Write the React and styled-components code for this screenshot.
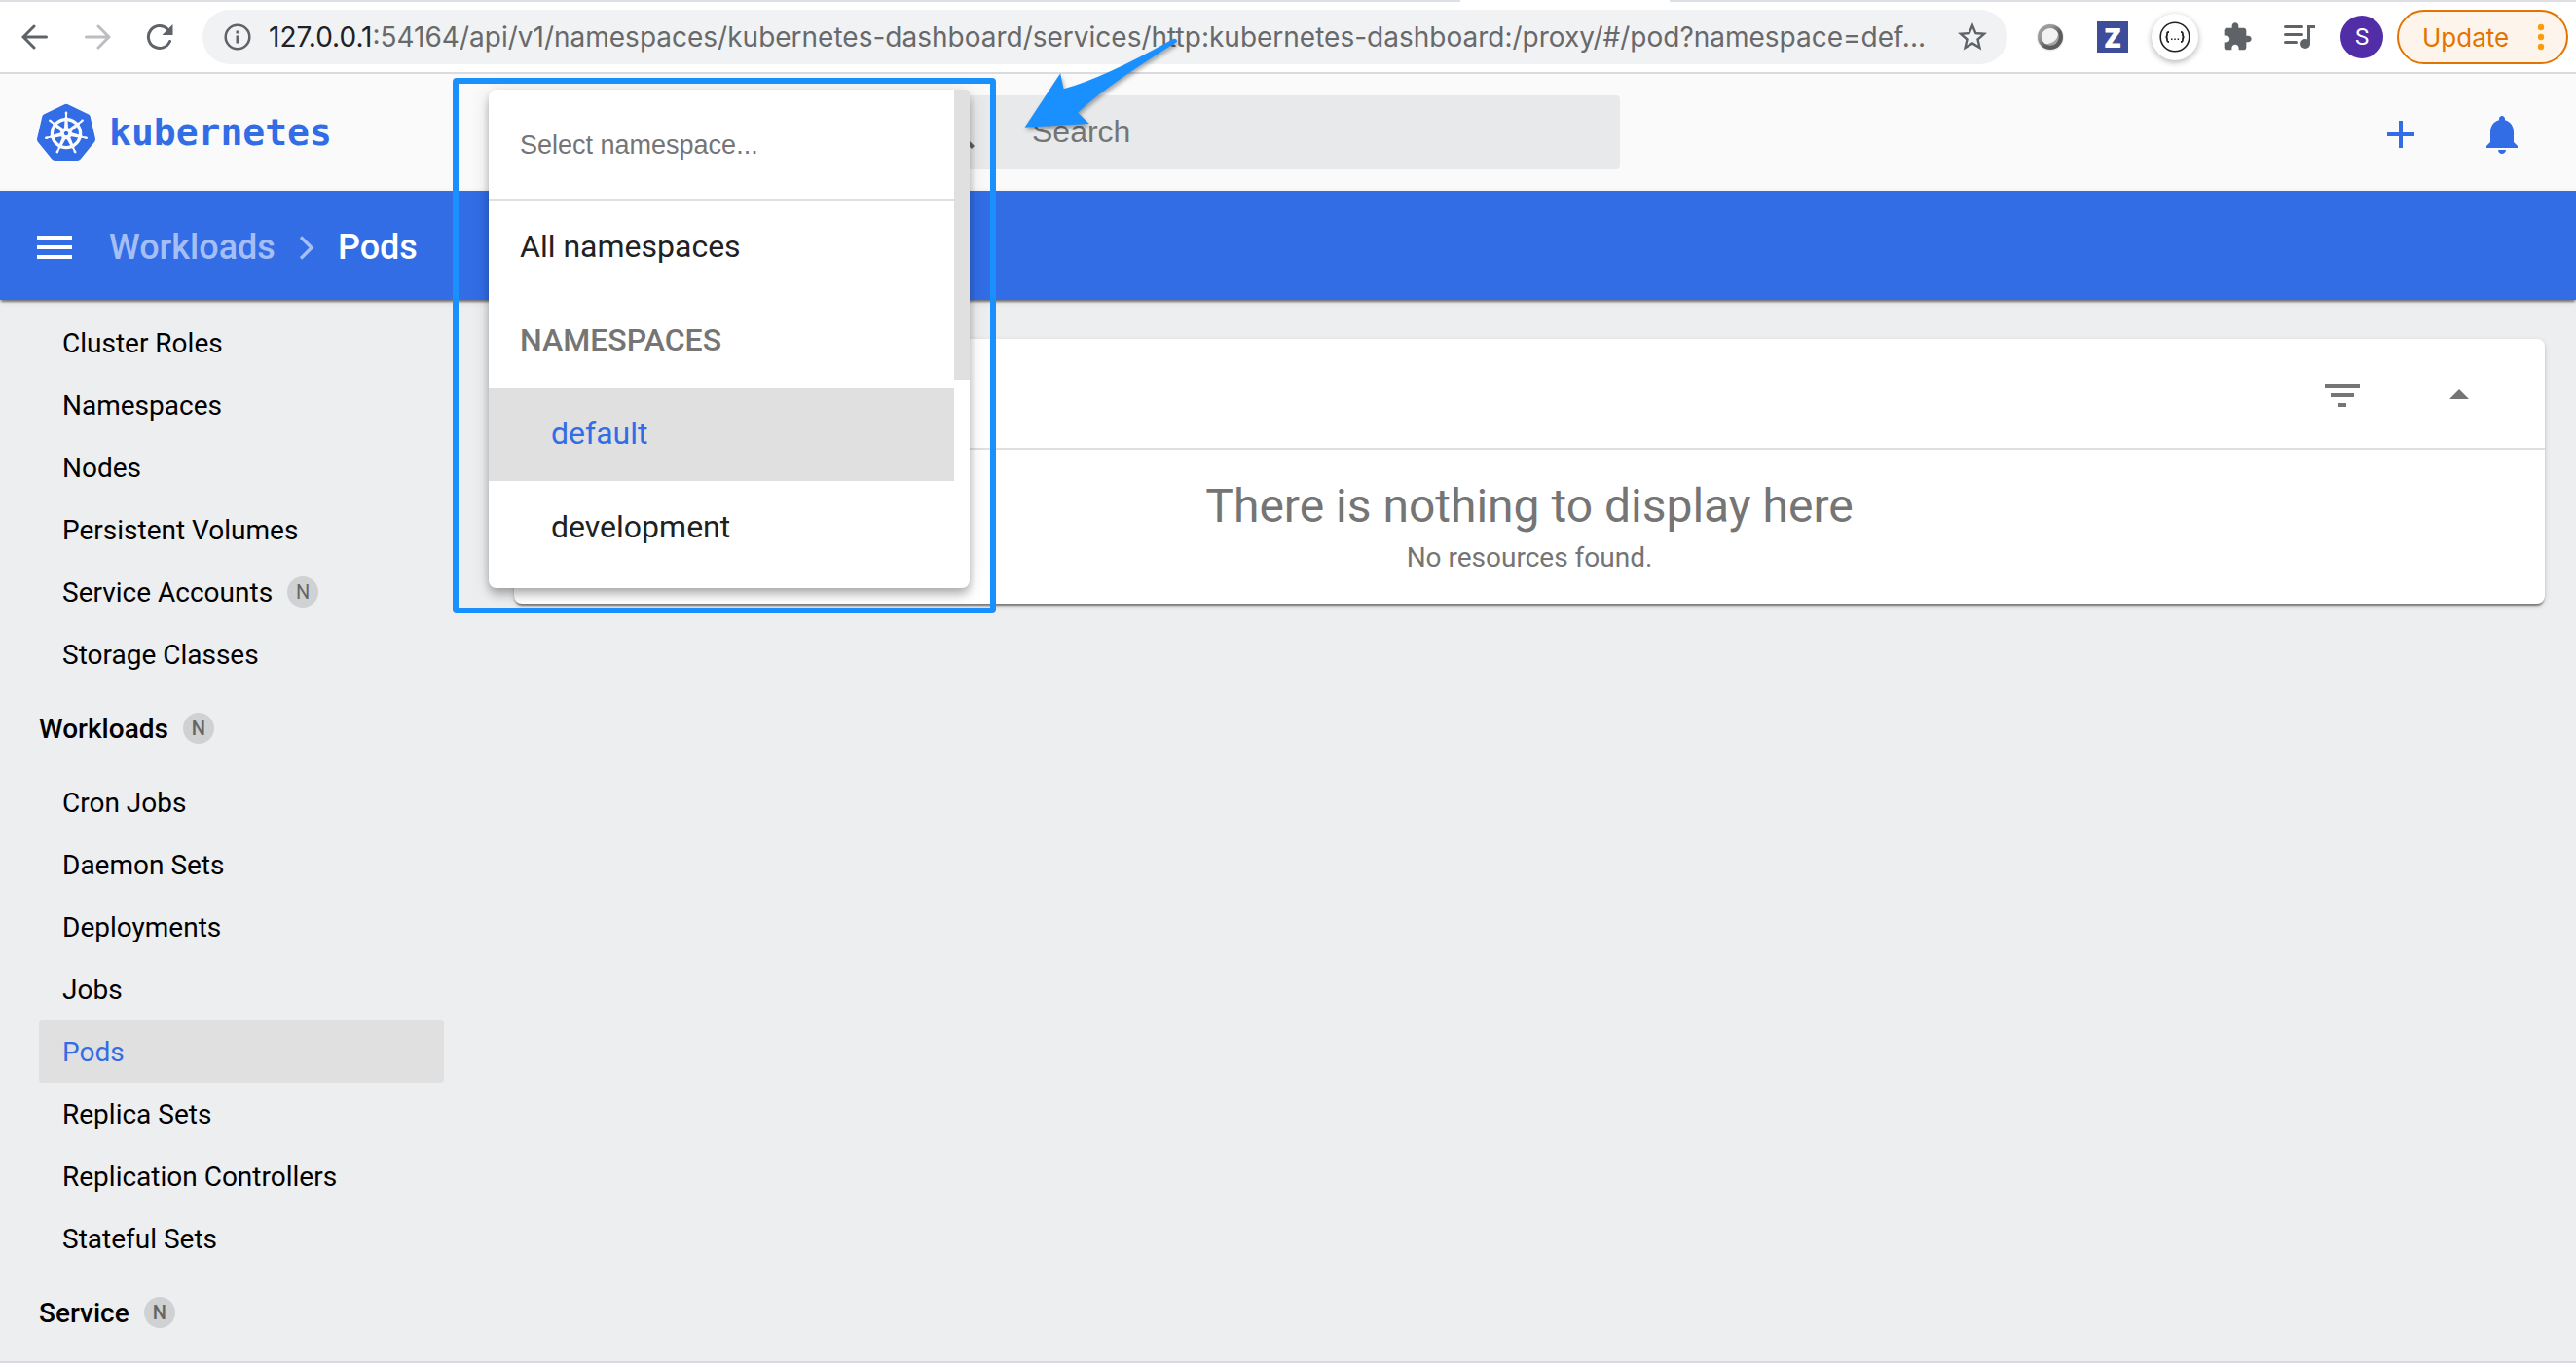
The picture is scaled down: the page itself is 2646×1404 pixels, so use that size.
import React from "react";
import styled, { createGlobalStyle, css } from "styled-components";
import { SiKubernetes } from "react-icons/si";

const color = {
  blue: "#326de6",
  mark: "#1a90ff",
  chrome: "#5f6368",
  muted: "#757575",
  line: "#e0e0e0",
  page: "#edeef0",
};

const GlobalStyle = createGlobalStyle`
  *, *::before, *::after { box-sizing: border-box; }
  body { margin: 0; background: #fff; font-family: Roboto, "Open Sans", sans-serif; font-size: 28px; }
  button, input { font: inherit; color: inherit; border: 0; padding: 0; margin: 0; background: none; outline: none; }
  button { cursor: pointer; }
  a { color: inherit; text-decoration: none; }
  ul { list-style: none; margin: 0; padding: 0; }
  svg { display: block; }
`;

const Window = styled.div`
  display: flex;
  flex-direction: column;
  min-height: 100vh;
`;

/* Browser chrome */

const TabEdge = styled.div`
  display: grid;
  grid-template-columns: 1500fr 215fr 931fr;
  height: 2px;
`;

const TabEdgePart = styled.span`
  background: ${(p) => (p.$active ? "#fff" : "#dfdfe6")};
`;

const BrowserBar = styled.div`
  display: flex;
  align-items: center;
  height: 74px;
  padding: 0 8px 0 4px;
  border-bottom: 2px solid #dadbe0;
  background: #fff;
  color: ${color.chrome};
`;

const ChromeButton = styled.button`
  display: flex;
  align-items: center;
  justify-content: center;
  flex: none;
  width: 64px;
  height: 56px;
  opacity: ${(p) => (p.disabled ? 0.42 : 1)};
`;

const AddressBar = styled.div`
  display: flex;
  align-items: center;
  flex: 1;
  min-width: 0;
  height: 56px;
  margin: 0 12px;
  padding: 0 18px 0 20px;
  border-radius: 28px;
  background: #f1f2f4;
`;

const Address = styled.div`
  flex: 1;
  min-width: 0;
  margin: 0 28px 0 16px;
  overflow: hidden;
  white-space: nowrap;
  text-overflow: ellipsis;
  font-family: Inter, Roboto, sans-serif;
  font-size: 28px;
  line-height: 40px;
  color: #68696b;
`;

const AddressHost = styled.span`
  color: #202124;
`;

const ZBadge = styled.span`
  display: grid;
  place-items: center;
  width: 32px;
  height: 32px;
  background: #3d4d99;
  color: #fff;
  font-family: "Open Sans", sans-serif;
  font-size: 28px;
  font-weight: 800;
  line-height: 32px;
`;

const RoundBadge = styled.span`
  display: grid;
  place-items: center;
  width: 48px;
  height: 48px;
  border-radius: 50%;
  background: #fff;
  box-shadow: 0 2px 6px rgba(0, 0, 0, 0.3);
`;

const Avatar = styled.span`
  display: grid;
  place-items: center;
  width: 44px;
  height: 44px;
  border-radius: 50%;
  background: #512da8;
  color: #fff;
  font-size: 24px;
`;

const UpdateButton = styled.button`
  display: flex;
  align-items: center;
  justify-content: space-between;
  flex: none;
  width: 176px;
  height: 56px;
  margin-left: 4px;
  padding: 0 22px 0 24px;
  border: 2px solid #e37400;
  border-radius: 28px;
  background: #fdf5eb;
  color: #e37400;
  font-family: Inter, Roboto, sans-serif;
  font-size: 26px;
`;

/* Dashboard header */

const Header = styled.header`
  display: flex;
  align-items: center;
  height: 120px;
  padding: 0 36px 0 38px;
  background: #fafafa;
`;

const Brand = styled.a`
  display: flex;
  align-items: center;
  gap: 14px;
  flex: none;
  width: 464px;
  color: ${color.blue};
  font-family: "DejaVu Sans Mono", monospace;
  font-size: 38px;
  font-weight: 700;
  line-height: 60px;

  svg { filter: drop-shadow(0 0 1px #fff); }
`;

const NamespacePicker = styled.div`
  position: relative;
  z-index: 2;
  flex: none;
  align-self: stretch;
  width: 434px;
`;

const SearchBox = styled.label`
  display: flex;
  align-items: center;
  flex: 0 1 728px;
  height: 76px;
  padding: 0 24px;
  border-radius: 4px;
  background: #e7e9eb;
  color: #616161;
`;

const SearchInput = styled.input`
  flex: 1;
  min-width: 0;
  margin-left: 52px;
  padding-bottom: 2px;
  font-family: "Liberation Sans", sans-serif;
  font-size: 32px;

  &::placeholder { color: ${color.muted}; opacity: 1; }
`;

const HeaderActions = styled.div`
  display: flex;
  gap: 24px;
  margin-left: auto;
  padding-top: 4px;
  color: ${color.blue};
`;

const IconButton = styled.button`
  display: grid;
  place-items: center;
  width: 80px;
  height: 80px;
`;

/* Namespace drop-down */

const Panel = styled.div`
  position: absolute;
  top: 16px;
  left: 0;
  display: flex;
  width: 494px;
  height: 512px;
  border-radius: 8px;
  background: #fff;
  box-shadow: 0 4px 8px -2px rgba(0, 0, 0, 0.2), 0 8px 10px rgba(0, 0, 0, 0.14),
    0 2px 20px rgba(0, 0, 0, 0.12);
`;

const PanelList = styled.div`
  display: flex;
  flex-direction: column;
  flex: 1;
`;

const PanelScroll = styled.div`
  width: 16px;
`;

const PanelThumb = styled.div`
  height: 298px;
  border-top-right-radius: 4px;
  background: ${color.line};
`;

const FilterInput = styled.input`
  width: 100%;
  height: 114px;
  padding: 2px 32px 0;
  border-bottom: 2px solid ${color.line};
  font-family: "Liberation Sans", sans-serif;
  font-size: 27px;

  &::placeholder { color: ${color.muted}; opacity: 1; }
`;

const optionRow = css`
  height: 96px;
  padding: 0 32px 2px;
  font-size: 32px;
  line-height: 94px;
  text-align: left;
`;

const Option = styled.button`
  ${optionRow}
  padding-left: ${(p) => (p.$nested ? 64 : 32)}px;
  color: ${(p) => (p.$selected ? color.blue : "#212121")};
  background: ${(p) => (p.$selected ? color.line : "transparent")};
`;

const OptionGroup = styled.div`
  ${optionRow}
  color: ${color.muted};
  font-weight: 500;
`;

/* Annotation */

const MarkBox = styled.div`
  position: absolute;
  top: 4px;
  left: -37px;
  width: 558px;
  height: 550px;
  border: 6px solid ${color.mark};
  border-radius: 4px;
  pointer-events: none;
`;

const MarkArrow = styled.svg`
  position: absolute;
  top: -40px;
  left: 546px;
  pointer-events: none;
  filter: drop-shadow(1px 3px 2px rgba(0, 0, 0, 0.35));
`;

/* Breadcrumbs */

const ActionBar = styled.div`
  position: relative;
  z-index: 1;
  display: flex;
  align-items: center;
  height: 112px;
  padding: 4px 32px 0 16px;
  background: ${color.blue};
  color: #fff;
  box-shadow: 0 4px 2px -2px rgba(0, 0, 0, 0.3), 0 2px 2px rgba(0, 0, 0, 0.2),
    0 2px 6px rgba(0, 0, 0, 0.12);
`;

const Crumbs = styled.nav`
  display: flex;
  align-items: center;
  gap: 23px;
  margin-left: 16px;
  font-size: 36px;
  font-weight: 500;
  line-height: 48px;
`;

const Crumb = styled.a`
  color: ${(p) => (p.$current ? "#fff" : "#a5bef5")};
`;

/* Body */

const Body = styled.div`
  display: grid;
  grid-template-columns: 496px minmax(0, 1fr);
  flex: 1;
  background: ${color.page};
  border-bottom: 2px solid #dadbe0;
  margin-bottom: 4px;
`;

const Sidebar = styled.nav`
  padding: 12px 40px 0;
  color: #000;
`;

const NavHeading = styled.a`
  display: flex;
  align-items: center;
  gap: 15px;
  height: 88px;
  font-weight: 500;
`;

const NavItem = styled.a`
  display: flex;
  align-items: center;
  gap: 15px;
  height: 64px;
  padding: 0 24px;
  border-radius: 4px;
  color: ${(p) => (p.$active ? color.blue : "inherit")};
  background: ${(p) => (p.$active ? color.line : "transparent")};
`;

const Badge = styled.span`
  display: grid;
  place-items: center;
  width: 32px;
  height: 32px;
  border-radius: 50%;
  background: #d0d1d3;
  color: #666;
  font-size: 20px;
`;

const Main = styled.main`
  padding: 40px 32px;
`;

const Card = styled.section`
  border-radius: 8px;
  background: #fff;
  color: ${color.muted};
  box-shadow: 0 4px 2px -2px rgba(0, 0, 0, 0.3), 0 2px 2px rgba(0, 0, 0, 0.2),
    0 2px 6px rgba(0, 0, 0, 0.12);
`;

const CardHeader = styled.div`
  display: flex;
  align-items: center;
  justify-content: flex-end;
  gap: 40px;
  height: 114px;
  padding: 4px 48px 0;
  border-bottom: 2px solid ${color.line};
`;

const Empty = styled.div`
  padding: 26px 0;
  text-align: center;
`;

const EmptyTitle = styled.h2`
  margin: 0;
  font-size: 48px;
  font-weight: 400;
  line-height: 64px;
`;

const EmptyText = styled.p`
  margin: 0;
  line-height: 42px;
`;

function Icon({ d, size = 48 }) {
  return (
    <svg width={size} height={size} viewBox="0 0 24 24" fill="currentColor" aria-hidden="true">
      <path d={d} />
    </svg>
  );
}

function ArrowIcon({ flip }) {
  return (
    <svg
      width="28"
      height="28"
      viewBox="0 0 28 28"
      fill="none"
      stroke="currentColor"
      strokeWidth="3"
      strokeLinecap="round"
      aria-hidden="true"
    >
      <path d={flip ? "M2.5 14H25M15 3l11 11-11 11" : "M25.500 14H3M13 3L2 14l11 11"} />
    </svg>
  );
}

function ReloadIcon() {
  return (
    <svg width="28" height="28" viewBox="0 0 28 28" aria-hidden="true">
      <path
        d="M24.500 18.500A11.500 11.500 0 1 1 22 5.800"
        fill="none"
        stroke="currentColor"
        strokeWidth="3"
        strokeLinecap="round"
      />
      <path d="M27.500 1v11H16.500z" fill="currentColor" />
    </svg>
  );
}

function InfoIcon() {
  return (
    <svg width="32" height="32" viewBox="0 0 32 32" aria-hidden="true">
      <circle cx="16" cy="16" r="12.300" fill="none" stroke="currentColor" strokeWidth="2.500" />
      <path d="M14.500 9.500h3v3h-3zM14.500 14.500h3v8h-3z" fill="currentColor" />
    </svg>
  );
}

function OrbIcon() {
  return (
    <svg width="32" height="32" viewBox="0 0 32 32" aria-hidden="true">
      <defs>
        <linearGradient id="orbRing" x1="0" y1="0" x2="1" y2="1">
          <stop offset="0.300" stopColor="#9b9b9b" />
          <stop offset="0.600" stopColor="#5c5c5c" />
        </linearGradient>
      </defs>
      <circle cx="16" cy="16.500" r="14" fill="#ececec" />
      <circle cx="16" cy="16" r="13" fill="url(#orbRing)" />
      <circle cx="16" cy="16" r="8.800" fill="#a5a5a5" />
      <path d="M24 12.500a8.800 8.800 0 1 0-13 10.600c7 0 12.500-4 13-10.600z" fill="#f2f2f2" />
    </svg>
  );
}

function BracesIcon() {
  return (
    <svg width="32" height="32" viewBox="0 0 32 32" fill="none" stroke="#222" aria-hidden="true">
      <circle cx="16" cy="16" r="14.800" strokeWidth="1.600" />
      <path
        d="M10 11c-2 0-2 .6-2 2.500S7.500 16 6.500 16c1 0 1.500.6 1.500 2.500S8 21 10 21M22 11c2 0 2 .6 2 2.500s.5 2.500 1.500 2.500c-1 0-1.500.6-1.500 2.500S24 21 22 21"
        strokeWidth="1.800"
      />
      <path d="M12 18.200h1.500M15.300 18.200h1.500M18.600 18.200h1.500" strokeWidth="1.500" />
    </svg>
  );
}

function QueueIcon() {
  return (
    <svg width="32" height="28" viewBox="0 0 32 28" aria-hidden="true">
      <path
        d="M1.500 3.500h17M1.500 11.500h17M1.500 19.500h11"
        stroke="currentColor"
        strokeWidth="3"
        strokeLinecap="round"
      />
      <path d="M24 16.500V2h8v3h-5v16z" fill="currentColor" />
      <circle cx="22" cy="21" r="5" fill="currentColor" />
    </svg>
  );
}

function DotsIcon() {
  return (
    <svg width="8" height="28" viewBox="0 0 8 28" fill="#f99d0b" aria-hidden="true">
      <circle cx="4" cy="4" r="3.200" />
      <circle cx="4" cy="14" r="3.200" />
      <circle cx="4" cy="24" r="3.200" />
    </svg>
  );
}

function ChevronIcon() {
  return (
    <svg width="18" height="28" viewBox="0 0 18 28" fill="none" stroke="#a5bef5" strokeWidth="3.500" aria-hidden="true">
      <path d="M3 3.500L14 14.500L3 25.500" />
    </svg>
  );
}

const icons = {
  star: "M22 9.240l-7.190-.620L12 2 9.190 8.630 2 9.240l5.460 4.730L5.820 21 12 17.270 18.180 21l-1.630-7.030L22 9.240zM12 15.400l-3.760 2.270 1-4.280-3.320-2.880 4.380-.380L12 6.100l1.710 4.040 4.380.380-3.320 2.880 1 4.280L12 15.400z",
  puzzle:
    "M20.500 11H19V7c0-1.100-.900-2-2-2h-4V3.500C13 2.120 11.880 1 10.500 1S8 2.120 8 3.500V5H4c-1.100 0-1.990.900-1.990 2v3.800H3.500c1.490 0 2.700 1.210 2.700 2.700s-1.210 2.700-2.700 2.700H2V20c0 1.100.900 2 2 2h3.800v-1.500c0-1.490 1.210-2.700 2.700-2.700 1.490 0 2.700 1.210 2.700 2.700V22H17c1.100 0 2-.900 2-2v-4h1.500c1.380 0 2.500-1.120 2.500-2.500S21.880 11 20.500 11z",
  search:
    "M15.500 14h-.790l-.280-.270A6.471 6.471 0 0 0 16 9.500 6.500 6.500 0 1 0 9.500 16c1.610 0 3.090-.590 4.230-1.570l.270.280v.790l5 4.990L20.490 19l-4.990-5zm-6 0C7.010 14 5 11.990 5 9.500S7.010 5 9.500 5 14 7.010 14 9.500 11.990 14 9.500 14z",
  add: "M19 13h-6v6h-2v-6H5v-2h6V5h2v6h6v2z",
  bell: "M12 22c1.100 0 2-.900 2-2h-4c0 1.100.890 2 2 2zm6-6v-5c0-3.070-1.640-5.640-4.500-6.320V4c0-.830-.670-1.500-1.500-1.500s-1.500.670-1.500 1.500v.680C7.630 5.360 6 7.920 6 11v5l-2 2v1h16v-1l-2-2z",
  menu: "M3 18h18v-2H3v2zm0-5h18v-2H3v2zm0-7v2h18V6H3z",
  filter: "M10 18h4v-2h-4v2zM3 6v2h18V6H3zm3 7h12v-2H6v2z",
  collapse: "M7 14l5-5 5 5z",
};

const clusterItems = [
  { name: "Cluster Roles" },
  { name: "Namespaces" },
  { name: "Nodes" },
  { name: "Persistent Volumes" },
  { name: "Service Accounts", namespaced: true },
  { name: "Storage Classes" },
];

const workloadItems = [
  { name: "Cron Jobs" },
  { name: "Daemon Sets" },
  { name: "Deployments" },
  { name: "Jobs" },
  { name: "Pods", active: true },
  { name: "Replica Sets" },
  { name: "Replication Controllers" },
  { name: "Stateful Sets" },
];

function NavList({ items }) {
  return (
    <ul>
      {items.map((item) => (
        <li key={item.name}>
          <NavItem href="#" $active={item.active}>
            {item.name}
            {item.namespaced && <Badge>N</Badge>}
          </NavItem>
        </li>
      ))}
    </ul>
  );
}

function BrowserChrome() {
  return (
    <>
      <TabEdge>
        <TabEdgePart />
        <TabEdgePart $active />
        <TabEdgePart />
      </TabEdge>
      <BrowserBar>
        <ChromeButton aria-label="Back"><ArrowIcon /></ChromeButton>
        <ChromeButton aria-label="Forward" disabled><ArrowIcon flip /></ChromeButton>
        <ChromeButton aria-label="Reload"><ReloadIcon /></ChromeButton>
        <AddressBar>
          <InfoIcon />
          <Address>
            <AddressHost>127.0.0.1</AddressHost>
            :54164/api/v1/namespaces/kubernetes-dashboard/services/http:kubernetes-dashboard:/proxy/#/pod?namespace=def...
          </Address>
          <Icon d={icons.star} size={36} />
        </AddressBar>
        <ChromeButton aria-label="Orb extension"><OrbIcon /></ChromeButton>
        <ChromeButton><ZBadge>Z</ZBadge></ChromeButton>
        <ChromeButton aria-label="JSON extension"><RoundBadge><BracesIcon /></RoundBadge></ChromeButton>
        <ChromeButton aria-label="Extensions"><Icon d={icons.puzzle} size={32} /></ChromeButton>
        <ChromeButton aria-label="Media queue"><QueueIcon /></ChromeButton>
        <ChromeButton><Avatar>S</Avatar></ChromeButton>
        <UpdateButton>Update<DotsIcon /></UpdateButton>
      </BrowserBar>
    </>
  );
}

function NamespaceSelect() {
  return (
    <NamespacePicker>
      <Panel>
        <PanelList>
          <FilterInput aria-label="Select namespace" placeholder="Select namespace..." />
          <Option>All namespaces</Option>
          <OptionGroup>NAMESPACES</OptionGroup>
          <Option $nested $selected>default</Option>
          <Option $nested>development</Option>
        </PanelList>
        <PanelScroll><PanelThumb /></PanelScroll>
      </Panel>
      <MarkBox />
      <MarkArrow width="170" height="100" viewBox="1048 36 170 100" aria-hidden="true">
        <path
          d="M1052.600 130.700L1089.200 75.300L1092.600 91.300Q1134 80 1205 40Q1209 39 1209 43Q1132 91 1107.300 115.700L1118.700 127Z"
          fill={color.mark}
        />
      </MarkArrow>
    </NamespacePicker>
  );
}

export default function App() {
  return (
    <Window>
      <GlobalStyle />
      <BrowserChrome />
      <Header>
        <Brand href="#">
          <SiKubernetes size={60} aria-hidden="true" />
          kubernetes
        </Brand>
        <NamespaceSelect />
        <SearchBox>
          <Icon d={icons.search} />
          <SearchInput aria-label="Search" placeholder="Search" />
        </SearchBox>
        <HeaderActions>
          <IconButton aria-label="Create"><Icon d={icons.add} /></IconButton>
          <IconButton aria-label="Notifications"><Icon d={icons.bell} /></IconButton>
        </HeaderActions>
      </Header>
      <ActionBar>
        <IconButton aria-label="Menu"><Icon d={icons.menu} /></IconButton>
        <Crumbs>
          <Crumb href="#">Workloads</Crumb>
          <ChevronIcon />
          <Crumb href="#" $current>Pods</Crumb>
        </Crumbs>
      </ActionBar>
      <Body>
        <Sidebar>
          <NavList items={clusterItems} />
          <NavHeading href="#">Workloads<Badge>N</Badge></NavHeading>
          <NavList items={workloadItems} />
          <NavHeading href="#">Service<Badge>N</Badge></NavHeading>
        </Sidebar>
        <Main>
          <Card>
            <CardHeader>
              <IconButton aria-label="Filter"><Icon d={icons.filter} /></IconButton>
              <IconButton aria-label="Collapse"><Icon d={icons.collapse} /></IconButton>
            </CardHeader>
            <Empty>
              <EmptyTitle>There is nothing to display here</EmptyTitle>
              <EmptyText>No resources found.</EmptyText>
            </Empty>
          </Card>
        </Main>
      </Body>
    </Window>
  );
}
